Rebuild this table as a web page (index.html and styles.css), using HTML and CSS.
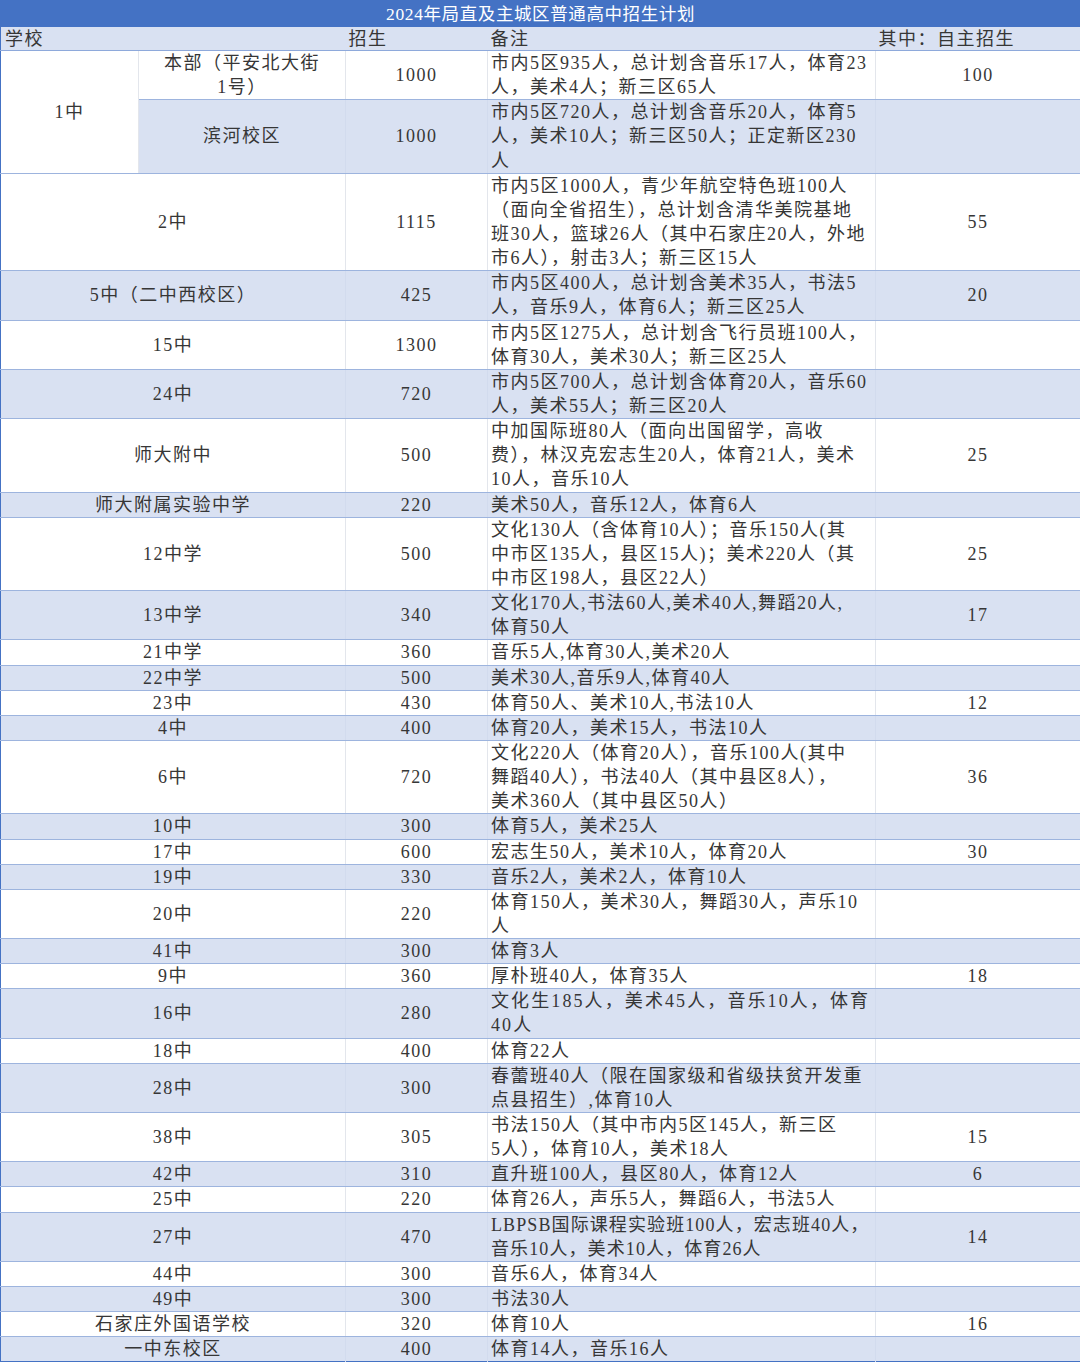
FILE: index.html
```html
<!DOCTYPE html>
<html lang="zh-CN">
<head>
<meta charset="utf-8">
<title>2024年局直及主城区普通高中招生计划</title>
<link rel="stylesheet" href="styles.css">
</head>
<body>
<table class="plan">
  <colgroup>
    <col class="c-a"><col class="c-b"><col class="c-c"><col class="c-d"><col class="c-e">
  </colgroup>
  <thead>
    <tr class="title"><th colspan="5">2024年局直及主城区普通高中招生计划</th></tr>
    <tr class="head">
      <th colspan="2">学校</th><th>招生</th><th>备注</th><th>其中：自主招生</th>
    </tr>
  </thead>
  <tbody>
    <tr class="w">
      <td rowspan="2" class="name w1">1中</td>
      <td class="name vl">本部（平安北大街<br>1号）</td>
      <td class="num">1000</td>
      <td class="note">市内5区935人，总计划含音乐17人，体育23<br>人，美术4人；新三区65人</td>
      <td class="num">100</td>
    </tr>
    <tr class="b">
      <td class="name vl">滨河校区</td>
      <td class="num">1000</td>
      <td class="note">市内5区720人，总计划含音乐20人，体育5<br>人，美术10人；新三区50人；正定新区230<br>人</td>
      <td class="num"></td>
    </tr>
    <tr class="w"><td colspan="2" class="name">2中</td><td class="num">1115</td><td class="note">市内5区1000人，青少年航空特色班100人<br>（面向全省招生），总计划含清华美院基地<br>班30人，篮球26人（其中石家庄20人，外地<br>市6人），射击3人；新三区15人</td><td class="num">55</td></tr>
    <tr class="b"><td colspan="2" class="name">5中（二中西校区）</td><td class="num">425</td><td class="note">市内5区400人，总计划含美术35人，书法5<br>人，音乐9人，体育6人；新三区25人</td><td class="num">20</td></tr>
    <tr class="w"><td colspan="2" class="name">15中</td><td class="num">1300</td><td class="note">市内5区1275人，总计划含飞行员班100人，<br>体育30人，美术30人；新三区25人</td><td class="num"></td></tr>
    <tr class="b"><td colspan="2" class="name">24中</td><td class="num">720</td><td class="note">市内5区700人，总计划含体育20人，音乐60<br>人，美术55人；新三区20人</td><td class="num"></td></tr>
    <tr class="w"><td colspan="2" class="name">师大附中</td><td class="num">500</td><td class="note">中加国际班80人（面向出国留学，高收<br>费），林汉克宏志生20人，体育21人，美术<br>10人，音乐10人</td><td class="num">25</td></tr>
    <tr class="b"><td colspan="2" class="name">师大附属实验中学</td><td class="num">220</td><td class="note">美术50人，音乐12人，体育6人</td><td class="num"></td></tr>
    <tr class="w"><td colspan="2" class="name">12中学</td><td class="num">500</td><td class="note">文化130人（含体育10人）；音乐150人(其<br>中市区135人，县区15人)；美术220人（其<br>中市区198人，县区22人）</td><td class="num">25</td></tr>
    <tr class="b"><td colspan="2" class="name">13中学</td><td class="num">340</td><td class="note">文化170人,书法60人,美术40人,舞蹈20人,<br>体育50人</td><td class="num">17</td></tr>
    <tr class="w"><td colspan="2" class="name">21中学</td><td class="num">360</td><td class="note">音乐5人,体育30人,美术20人</td><td class="num"></td></tr>
    <tr class="b"><td colspan="2" class="name">22中学</td><td class="num">500</td><td class="note">美术30人,音乐9人,体育40人</td><td class="num"></td></tr>
    <tr class="w"><td colspan="2" class="name">23中</td><td class="num">430</td><td class="note">体育50人、美术10人,书法10人</td><td class="num">12</td></tr>
    <tr class="b"><td colspan="2" class="name">4中</td><td class="num">400</td><td class="note">体育20人，美术15人，书法10人</td><td class="num"></td></tr>
    <tr class="w"><td colspan="2" class="name">6中</td><td class="num">720</td><td class="note">文化220人（体育20人），音乐100人(其中<br>舞蹈40人），书法40人（其中县区8人），<br>美术360人（其中县区50人）</td><td class="num">36</td></tr>
    <tr class="b"><td colspan="2" class="name">10中</td><td class="num">300</td><td class="note">体育5人，美术25人</td><td class="num"></td></tr>
    <tr class="w"><td colspan="2" class="name">17中</td><td class="num">600</td><td class="note">宏志生50人，美术10人，体育20人</td><td class="num">30</td></tr>
    <tr class="b"><td colspan="2" class="name">19中</td><td class="num">330</td><td class="note">音乐2人，美术2人，体育10人</td><td class="num"></td></tr>
    <tr class="w"><td colspan="2" class="name">20中</td><td class="num">220</td><td class="note">体育150人，美术30人，舞蹈30人，声乐10<br>人</td><td class="num"></td></tr>
    <tr class="b"><td colspan="2" class="name">41中</td><td class="num">300</td><td class="note">体育3人</td><td class="num"></td></tr>
    <tr class="w"><td colspan="2" class="name">9中</td><td class="num">360</td><td class="note">厚朴班40人，体育35人</td><td class="num">18</td></tr>
    <tr class="b"><td colspan="2" class="name">16中</td><td class="num">280</td><td class="note wide">文化生185人，美术45人，音乐10人，体育<br>40人</td><td class="num"></td></tr>
    <tr class="w"><td colspan="2" class="name">18中</td><td class="num">400</td><td class="note">体育22人</td><td class="num"></td></tr>
    <tr class="b"><td colspan="2" class="name">28中</td><td class="num">300</td><td class="note">春蕾班40人（限在国家级和省级扶贫开发重<br>点县招生）,体育10人</td><td class="num"></td></tr>
    <tr class="w"><td colspan="2" class="name">38中</td><td class="num">305</td><td class="note">书法150人（其中市内5区145人，新三区<br>5人），体育10人，美术18人</td><td class="num">15</td></tr>
    <tr class="b"><td colspan="2" class="name">42中</td><td class="num">310</td><td class="note">直升班100人，县区80人，体育12人</td><td class="num">6</td></tr>
    <tr class="w"><td colspan="2" class="name">25中</td><td class="num">220</td><td class="note">体育26人，声乐5人，舞蹈6人，书法5人</td><td class="num"></td></tr>
    <tr class="b"><td colspan="2" class="name">27中</td><td class="num">470</td><td class="note tight">LBPSB国际课程实验班100人，宏志班40人，<br>音乐10人，美术10人，体育26人</td><td class="num">14</td></tr>
    <tr class="w"><td colspan="2" class="name">44中</td><td class="num">300</td><td class="note">音乐6人，体育34人</td><td class="num"></td></tr>
    <tr class="b"><td colspan="2" class="name">49中</td><td class="num">300</td><td class="note">书法30人</td><td class="num"></td></tr>
    <tr class="w"><td colspan="2" class="name">石家庄外国语学校</td><td class="num">320</td><td class="note">体育10人</td><td class="num">16</td></tr>
    <tr class="b last"><td colspan="2" class="name">一中东校区</td><td class="num">400</td><td class="note">体育14人，音乐16人</td><td class="num"></td></tr>
  </tbody>
</table>
</body>
</html>
```

FILE: styles.css
```css
html, body {
  margin: 0;
  padding: 0;
  background: #ffffff;
}

.plan {
  width: 1080px;
  border-collapse: collapse;
  table-layout: fixed;
  font-family: "Liberation Serif", "Times New Roman", "Noto Sans CJK SC", serif;
  font-size: 18px;
  color: #363636;
  border-left: 1px solid #4472c4;
  border-right: 1px solid #4472c4;
  border-bottom: 1px solid #4472c4;
}

.c-a { width: 138px; }
.c-b { width: 207px; }
.c-c { width: 142px; }
.c-d { width: 388px; }
.c-e { width: 205px; }

.plan th,
.plan td {
  padding: 0;
  font-weight: normal;
  vertical-align: middle;
  white-space: nowrap;
  overflow: hidden;
}

.title th {
  height: 26px;
  background: #4472c4;
  color: #ffffff;
  font-size: 17.5px;
  letter-spacing: 0.6px;
  text-align: center;
  line-height: 25px;
  padding-top: 1px;
}

.head th {
  background: #d9e1f2;
  text-align: left;
  line-height: 21px;
  padding-top: 2px;
  letter-spacing: 1.5px;
  padding-left: 3px;
  border-bottom: 1px solid #8ea9db;
}

.head th:first-child { padding-left: 4px; }

.plan tbody td {
  line-height: 24.14px;
  letter-spacing: 1.5px;
  border-bottom: 1px solid #9db4de;
  border-right: 1px solid #e3e6ec;
}

.plan tbody td:last-child { border-right: none; }

.plan tbody tr.w td { background: #ffffff; }
.plan tbody tr.b td { background: #d9e1f2; border-right-color: #d2dbee; }
.plan tbody tr.b td.w1 { background: #ffffff; border-right-color: #e3e6ec; }

.plan tbody tr.last td { border-bottom: none; }

.name { text-align: center; }
.num { text-align: center; }
.note {
  text-align: left;
  padding-left: 3px !important;
}
.note.wide { letter-spacing: 2.1px; }
.note.tight { letter-spacing: 1.1px; }
```
